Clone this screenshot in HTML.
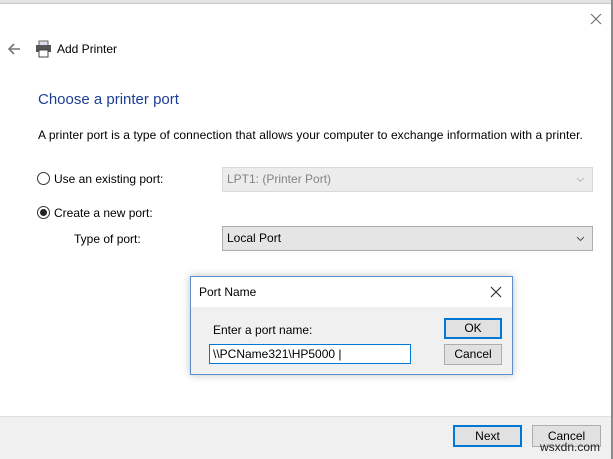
<!DOCTYPE html>
<html><head><style>
*{margin:0;padding:0;box-sizing:border-box}
body{width:613px;height:459px;overflow:hidden;background:#fff;font-family:"Liberation Sans",Arial,sans-serif;font-size:12px;color:#000;position:relative}
.a{position:absolute}
.combo{position:absolute;border:1px solid #adadad;background:#e5e5e5;padding-left:4px;line-height:23px}
.btn{position:absolute;border:1px solid #adadad;background:#e1e1e1;text-align:center}
</style></head><body>
<div class="a" style="left:0;top:0;width:613px;height:4px;background:#e3e3e3;border-bottom:1px solid #c8c8c8"></div>
<div class="a" style="left:611px;top:0;width:2px;height:459px;background:#8a8a8a"></div>
<svg class="a" style="left:590px;top:13px" width="12" height="12"><path d="M1 1L11 11M11 1L1 11" stroke="#666" stroke-width="1"/></svg>
<svg class="a" style="left:7px;top:43px" width="14" height="12"><path d="M13 6H2M7 1L2 6L7 11" stroke="#777" stroke-width="1.6" fill="none"/></svg>
<svg class="a" style="left:35px;top:40px" width="17" height="18"><rect x="4" y="1" width="9" height="5" fill="#dde" stroke="#666"/><rect x="1" y="5" width="15" height="7" fill="#555"/><rect x="4" y="10" width="9" height="7" fill="#fff" stroke="#444"/></svg>
<div class="a" style="left:57px;top:42px;font-size:12px">Add Printer</div>
<div class="a" style="left:38px;top:91px;font-size:15px;color:#1c3f94">Choose a printer port</div>
<div class="a" style="left:38px;top:128px;letter-spacing:0.07px">A printer port is a type of connection that allows your computer to exchange information with a printer.</div>
<div class="a" style="left:37px;top:172px;width:13px;height:13px;border:1px solid #333;border-radius:50%"></div>
<div class="a" style="left:54px;top:172px">Use an existing port:</div>
<div class="combo" style="left:222px;top:167px;width:371px;height:25px;color:#838383;background:#ececec;border-color:#d9d9d9">LPT1: (Printer Port)<svg class="a" style="right:7px;top:9px" width="9" height="6"><path d="M1 1L4.5 4.5L8 1" stroke="#bbb" fill="none"/></svg></div>
<div class="a" style="left:37px;top:206px;width:13px;height:13px;border:1px solid #333;border-radius:50%"><div class="a" style="left:2px;top:2px;width:7px;height:7px;background:#222;border-radius:50%"></div></div>
<div class="a" style="left:54px;top:206px">Create a new port:</div>
<div class="a" style="left:74px;top:232px">Type of port:</div>
<div class="combo" style="left:222px;top:226px;width:371px;height:25px">Local Port<svg class="a" style="right:7px;top:9px" width="9" height="6"><path d="M1 1L4.5 4.5L8 1" stroke="#555" fill="none"/></svg></div>
<div class="a" style="left:0;top:416px;width:611px;height:43px;background:#f0f0f0;border-top:1px solid #dfdfdf"></div>
<div class="btn" style="left:453px;top:425px;width:69px;height:22px;border:2px solid #0078d7;line-height:18px">Next</div>
<div class="btn" style="left:532px;top:425px;width:69px;height:22px;line-height:20px">Cancel</div>
<div class="a" style="left:540px;top:440px;font-size:12px;color:#222">wsxdn.com</div>
<div class="a" style="left:190px;top:276px;width:323px;height:99px;border:1px solid #5a8fce;background:#f0f0f0;box-shadow:0 0 8px rgba(0,0,0,.25)">
<div class="a" style="left:0;top:0;width:321px;height:30px;background:#fff"></div>
<div class="a" style="left:8px;top:8px;font-size:12px">Port Name</div>
<svg class="a" style="left:299px;top:9px" width="12" height="12"><path d="M1 1L11 11M11 1L1 11" stroke="#222"/></svg>
<div class="a" style="left:22px;top:46px">Enter a port name:</div>
<div class="a" style="left:18px;top:67px;width:202px;height:20px;border:1px solid #0078d7;background:#fff;padding-left:3px;line-height:18px">\\PCName321\HP5000 |</div>
<div class="btn" style="left:253px;top:41px;width:58px;height:21px;border:2px solid #0078d7;line-height:17px">OK</div>
<div class="btn" style="left:253px;top:67px;width:58px;height:21px;line-height:19px">Cancel</div>
</div>
</body></html>
